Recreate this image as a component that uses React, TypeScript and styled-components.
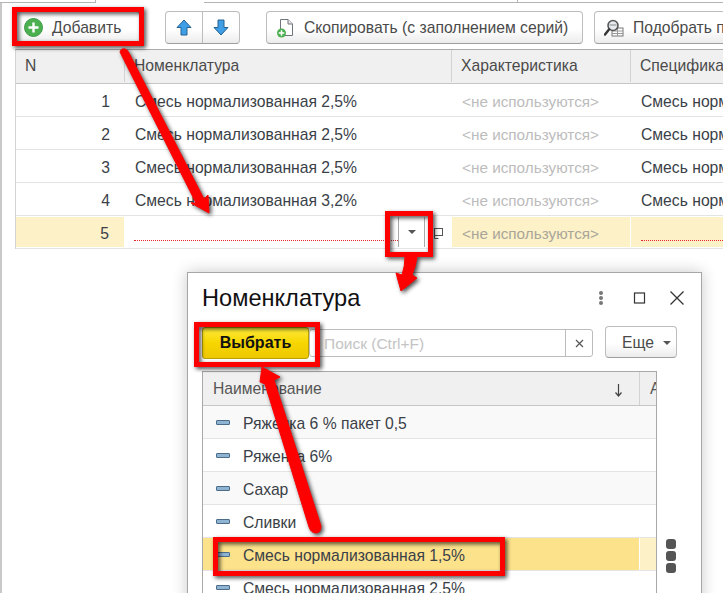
import * as React from 'react';
import styled, { createGlobalStyle } from 'styled-components';

const GlobalStyle = createGlobalStyle`
  html, body { margin: 0; padding: 0; background: #fff; }
  body { font-family: "Liberation Sans", Arial, sans-serif; font-size: 14px; color: #3a3f48; }
`;

const Page = styled.div`
  position: relative;
  width: 723px;
  height: 593px;
  overflow: hidden;
  background: #fff;
`;

//--- top tabs ---------------------------------------------------------------

const TabStrip = styled.div`
  display: flex;
  height: 3px;
`;

const TabPiece = styled.div<{ $width?: number; $open?: boolean; $edge?: boolean }>`
  flex: ${p => (p.$width ? `0 0 ${p.$width}px` : '1')};
  border-bottom: ${p => (p.$open ? 'none' : '1px solid #b4b4b4')};
  border-right: ${p => (p.$edge ? '1px solid #b4b4b4' : 'none')};
`;

const Body = styled.div`
  border-left: 2px solid #c8c8c8;
  height: 590px;
  margin-left: 0;
`;

//--- toolbar ----------------------------------------------------------------

const Toolbar = styled.div`
  display: flex;
  align-items: flex-start;
  height: 46px;
  padding: 8px 0 0 13px;
  box-sizing: border-box;
  white-space: nowrap;
`;

const ToolButton = styled.div<{ $width: number; $gap?: number; $pad?: number }>`
  display: flex;
  align-items: center;
  flex: 0 0 ${p => p.$width}px;
  height: 33px;
  box-sizing: border-box;
  margin-left: ${p => p.$gap || 0}px;
  padding-left: ${p => p.$pad || 9}px;
  gap: 9px;
  font-size: 15.7px;
  color: #4a4a4a;
  border: 1px solid #bdbdbd;
  border-bottom-color: #9e9e9e;
  border-radius: 4px;
  background: linear-gradient(#ffffff 55%, #ececec);
`;

const ButtonGroup = styled.div`
  display: flex;
  flex: 0 0 75px;
  height: 33px;
  margin-left: 25px;
  box-sizing: border-box;
  border: 1px solid #bdbdbd;
  border-bottom-color: #9e9e9e;
  border-radius: 4px;
  background: linear-gradient(#ffffff 55%, #ececec);
`;

const GroupPart = styled.div<{ $divider?: boolean }>`
  flex: 1;
  display: flex;
  align-items: center;
  justify-content: center;
  border-right: ${p => (p.$divider ? '1px solid #bdbdbd' : 'none')};
`;

//--- main grid --------------------------------------------------------------

const Grid = styled.div`
  margin-left: 13px;
  border-top: 1px solid #ababab;
  border-left: 1px solid #d4d4d4;
  white-space: nowrap;
`;

const GridRow = styled.div<{ $head?: boolean }>`
  display: flex;
  height: ${p => (p.$head ? 34 : 33)}px;
  box-sizing: border-box;
  border-bottom: 1px solid ${p => (p.$head ? '#c6c6c6' : '#e4e4e4')};
  background: ${p => (p.$head ? '#f0f0f0' : '#fff')};
  color: ${p => (p.$head ? '#4a4a4a' : '#3a3f48')};
  font-size: 15.7px;
`;

const GridCell = styled.div<{ $width: number; $right?: boolean; $muted?: boolean; $head?: boolean; $current?: boolean }>`
  position: relative;
  flex: 0 0 ${p => p.$width}px;
  height: ${p => (p.$current ? 30 : 32)}px;
  margin-top: ${p => (p.$current ? 1 : 0)}px;
  box-sizing: border-box;
  padding: ${p => (p.$right ? '0 15px 0 0' : `0 0 0 ${p.$head ? 9 : 10}px`)};
  line-height: ${p => (p.$current ? 34 : p.$head ? 32 : 36)}px;
  text-align: ${p => (p.$right ? 'right' : 'left')};
  font-size: ${p => (p.$muted ? '15.3px' : 'inherit')};
  color: ${p => (p.$muted ? (p.$current ? '#a9a599' : '#bcbcbc') : 'inherit')};
  overflow: hidden;
  background: ${p => (p.$current ? '#fdf1c8' : 'transparent')};
  border-right: ${p => (p.$head ? '1px solid #d2d2d2' : p.$current ? '1px solid #fff' : 'none')};
`;

const EditCell = styled.div`
  position: relative;
  flex: 0 0 327px;
  height: 30px;
  margin-top: 1px;
`;

const DottedLine = styled.div<{ $left: number; $right: number }>`
  position: absolute;
  left: ${p => p.$left}px;
  right: ${p => p.$right}px;
  bottom: 6px;
  border-bottom: 1px dotted #e8242c;
`;

const DropButton = styled.div`
  position: absolute;
  right: 27px;
  top: 0;
  width: 27px;
  height: 30px;
  box-sizing: border-box;
  border-left: 1px solid #a8a8a8;
  border-right: 1px solid #a8a8a8;
  display: flex;
  align-items: center;
  justify-content: center;
`;

const Caret = styled.div`
  width: 0;
  height: 0;
  border-left: 4px solid transparent;
  border-right: 4px solid transparent;
  border-top: 4px solid #555;
`;

const OpenIcon = styled.svg`
  position: absolute;
  right: 9px;
  top: 11px;
`;

//--- dialog -----------------------------------------------------------------

const Dialog = styled.div`
  position: absolute;
  left: 187px;
  top: 272px;
  width: 515px;
  height: 340px;
  box-sizing: border-box;
  background: #fff;
  border: 1px solid #a6a6a6;
  box-shadow: 0 0 14px rgba(0, 0, 0, 0.22);
  padding-left: 14px;
`;

const TitleBar = styled.div`
  display: flex;
  align-items: center;
  height: 50px;
  padding-right: 17px;
`;

const Title = styled.div`
  flex: 1;
  font-size: 23.6px;
  color: #111;
`;

const WindowIcons = styled.svg`
  display: block;
`;

const CommandBar = styled.div`
  display: flex;
  align-items: flex-start;
  height: 48px;
  padding-top: 4px;
  box-sizing: border-box;
`;

const ChooseButton = styled.div`
  flex: 0 0 107px;
  height: 32px;
  box-sizing: border-box;
  text-align: center;
  line-height: 30px;
  font-size: 16px;
  font-weight: bold;
  color: #111;
  border: 1px solid #b9a000;
  border-radius: 3px;
  background: linear-gradient(#ffeb3a, #f6d500 50%, #eec800);
`;

const SearchBox = styled.div`
  flex: 0 0 284px;
  display: flex;
  height: 28px;
  margin-top: 2px;
  box-sizing: border-box;
  border: 1px solid #bcbcbc;
  border-radius: 3px;
  font-size: 15.5px;
  line-height: 28px;
  color: #c4c4c4;
`;

const SearchText = styled.div`
  flex: 1;
  padding-left: 14px;
`;

const ClearButton = styled.div`
  flex: 0 0 26px;
  display: flex;
  align-items: center;
  justify-content: center;
  border-left: 1px solid #bcbcbc;
`;

const MoreButton = styled.div`
  flex: 0 0 72px;
  height: 32px;
  margin: -1px 0 0 12px;
  box-sizing: border-box;
  display: flex;
  align-items: center;
  padding: 2px 0 0 16px;
  gap: 9px;
  font-size: 15.7px;
  color: #4a4a4a;
  border: 1px solid #bdbdbd;
  border-bottom-color: #9e9e9e;
  border-radius: 4px;
  background: linear-gradient(#ffffff 55%, #ececec);
`;

const ListWrap = styled.div`
  display: flex;
`;

const List = styled.div`
  flex: 0 0 455px;
  width: 455px;
  min-width: 0;
  height: 240px;
  overflow: hidden;
  box-sizing: border-box;
  border: 1px solid #a8a8a8;
  border-bottom: none;
  font-size: 15.7px;
  white-space: nowrap;
`;

const ListHead = styled.div`
  display: flex;
  height: 34px;
  box-sizing: border-box;
  background: #f0f0f0;
  border-bottom: 1px solid #c6c6c6;
  color: #555;
`;

const HeadName = styled.div`
  position: relative;
  flex: 0 0 437px;
  padding-left: 10px;
  box-sizing: border-box;
  line-height: 33px;
  border-right: 1px solid #d2d2d2;
`;

const SortArrow = styled.svg`
  position: absolute;
  right: 16px;
  top: 11px;
`;

const HeadRest = styled.div`
  flex: 1;
  min-width: 0;
  padding-left: 10px;
  line-height: 33px;
  overflow: hidden;
`;

const ListRow = styled.div<{ $odd?: boolean; $active?: boolean }>`
  display: flex;
  height: 33px;
  box-sizing: border-box;
  border-bottom: 1px solid #e4e4e4;
  background: ${p => (p.$odd ? '#f9f9f9' : '#fff')};
  color: #3a3f48;
`;

const NameCell = styled.div<{ $active?: boolean }>`
  flex: 0 0 437px;
  display: flex;
  align-items: center;
  gap: 13px;
  box-sizing: border-box;
  padding-left: 13px;
  height: 32px;
  background: ${p => (p.$active ? '#fde28c' : 'transparent')};
  border-right: ${p => (p.$active ? '1px solid #fff' : 'none')};
`;

const ItemName = styled.span`
  padding-top: 3px;
`;

const RestCell = styled.div<{ $active?: boolean }>`
  flex: 1;
  height: 32px;
  background: ${p => (p.$active ? '#fdf1c8' : 'transparent')};
`;

const ItemMark = styled.div`
  flex: 0 0 14px;
  height: 5px;
  box-sizing: border-box;
  background: #8fb3d3;
  border: 1px solid #4d6c88;
  border-radius: 1px;
`;

const DotRail = styled.div`
  display: flex;
  flex-direction: column;
  gap: 2px;
  padding: 168px 0 0 9px;
`;

const Dot = styled.div`
  width: 10px;
  height: 10px;
  border-radius: 3px;
  background: #555;
`;

//--- red marks over the screenshot ------------------------------------------

const Marks = styled.svg`
  position: absolute;
  left: 0;
  top: 0;
  pointer-events: none;
  filter: drop-shadow(2px 2px 2px rgba(0, 0, 0, 0.7));
`;

//--- icons ------------------------------------------------------------------

const PlusIcon = () => (
  <svg width="19" height="19" viewBox="0 0 19 19">
    <circle cx="9.5" cy="9.5" r="9" fill="#4caf50" stroke="#3d9a45" />
    <path d="M9.5 4.5v10M4.5 9.5h10" stroke="#fff" strokeWidth="2.4" />
  </svg>
);

const BlueArrow = ({ down }: { down?: boolean }) => (
  <svg width="16" height="17" viewBox="0 0 16 17" style={down ? { transform: 'scaleY(-1)' } : undefined}>
    <path d="M8 1 L15 8.5 H11 V16 H5 V8.5 H1 Z" fill="#3f9fe6" stroke="#25618f" strokeWidth="1" strokeLinejoin="round" />
  </svg>
);

const CopyIcon = () => (
  <svg width="19" height="20" viewBox="0 0 19 20">
    <path d="M4.5 1.5 H12 L16.5 6 V17.5 H4.5 Z" fill="#fff" stroke="#70757c" />
    <path d="M12 1.5 V6 H16.5" fill="#e8e8e8" stroke="#70757c" />
    <circle cx="5.5" cy="15" r="4.5" fill="#4caf50" />
    <path d="M5.5 12.2v5.6M2.7 15h5.6" stroke="#fff" strokeWidth="1.5" />
  </svg>
);

const PickIcon = () => (
  <svg width="20" height="18" viewBox="0 0 20 18">
    <rect x="8" y="9" width="11" height="8" fill="#fff" stroke="#777" />
    <path d="M8 12h11M13.5 9v8M8 14.5h11" stroke="#999" strokeWidth="1" />
    <circle cx="9" cy="6.5" r="5" fill="#e6eaee" stroke="#555" strokeWidth="1.6" />
    <path d="M5.5 6h7" stroke="#888" />
    <path d="M5 10.5 L1 15.5" stroke="#333" strokeWidth="2.4" strokeLinecap="round" />
  </svg>
);

//--- data -------------------------------------------------------------------

const gridRows = [
  { n: 1, name: 'Смесь нормализованная 2,5%' },
  { n: 2, name: 'Смесь нормализованная 2,5%' },
  { n: 3, name: 'Смесь нормализованная 2,5%' },
  { n: 4, name: 'Смесь нормализованная 3,2%' },
];

const listRows = ['Ряженка 6 % пакет 0,5', 'Ряженка 6%', 'Сахар', 'Сливки', 'Смесь нормализованная 1,5%', 'Смесь нормализованная 2,5%'];

export default function App() {
  return (
    <Page>
      <GlobalStyle />
      <TabStrip>
        <TabPiece $width={95} $edge />
        <TabPiece $width={108} $open />
        <TabPiece $width={313} $edge />
        <TabPiece />
      </TabStrip>
      <Body>
        <Toolbar>
          <ToolButton $width={125} $pad={8}><PlusIcon />Добавить</ToolButton>
          <ButtonGroup>
            <GroupPart $divider><BlueArrow /></GroupPart>
            <GroupPart><BlueArrow down /></GroupPart>
          </ButtonGroup>
          <ToolButton $width={317} $gap={26}><CopyIcon />Скопировать (с заполнением серий)</ToolButton>
          <ToolButton $width={200} $gap={11}><PickIcon />Подобрать по штрихкоду</ToolButton>
        </Toolbar>
        <Grid>
          <GridRow $head>
            <GridCell $head $width={109}>N</GridCell>
            <GridCell $head $width={327}>Номенклатура</GridCell>
            <GridCell $head $width={179}>Характеристика</GridCell>
            <GridCell $head $width={95}>Спецификация</GridCell>
          </GridRow>
          {gridRows.map(r => (
            <GridRow key={r.n}>
              <GridCell $right $width={109}>{r.n}</GridCell>
              <GridCell $width={327}>{r.name}</GridCell>
              <GridCell $muted $width={179}>&lt;не используются&gt;</GridCell>
              <GridCell $width={95}>{r.name}</GridCell>
            </GridRow>
          ))}
          <GridRow>
            <GridCell $right $current $width={109}>5</GridCell>
            <EditCell>
              <DottedLine $left={9} $right={54} />
              <DropButton><Caret /></DropButton>
              <OpenIcon width="10" height="11" viewBox="0 0 10 11">
                <rect x="1.5" y="0.5" width="8" height="7" fill="#fff" stroke="#555" />
                <path d="M1.5 7.5v3h4" fill="none" stroke="#555" />
              </OpenIcon>
            </EditCell>
            <GridCell $muted $current $width={179}>&lt;не используются&gt;</GridCell>
            <GridCell $current $width={95}><DottedLine $left={10} $right={0} /></GridCell>
          </GridRow>
        </Grid>
      </Body>

      <Dialog>
        <TitleBar>
          <Title>Номенклатура</Title>
          <WindowIcons width="90" height="16" viewBox="0 0 90 16">
            <circle cx="7" cy="3" r="2" fill="#777" />
            <circle cx="7" cy="8" r="2" fill="#777" />
            <circle cx="7" cy="13" r="2" fill="#777" />
            <rect x="40.5" y="3" width="10" height="10" fill="none" stroke="#333" strokeWidth="1.2" />
            <path d="M76.5 1.5 L89.5 14.5 M89.5 1.5 L76.5 14.5" stroke="#333" strokeWidth="1.3" />
          </WindowIcons>
        </TitleBar>
        <CommandBar>
          <ChooseButton>Выбрать</ChooseButton>
          <SearchBox>
            <SearchText>Поиск (Ctrl+F)</SearchText>
            <ClearButton>
              <svg width="9" height="9" viewBox="0 0 9 9"><path d="M1 1l7 7M8 1l-7 7" stroke="#555" strokeWidth="1.2" /></svg>
            </ClearButton>
          </SearchBox>
          <MoreButton>Еще<Caret /></MoreButton>
        </CommandBar>
        <ListWrap>
          <List>
            <ListHead>
              <HeadName>
                Наименование
                <SortArrow width="9" height="14" viewBox="0 0 9 14">
                  <path d="M4.5 1v11M1.5 9.5l3 3.5 3-3.5" fill="none" stroke="#444" strokeWidth="1.2" />
                </SortArrow>
              </HeadName>
              <HeadRest>А</HeadRest>
            </ListHead>
            {listRows.map((name, i) => (
              <ListRow key={name} $odd={i % 2 === 0 && i < 4}>
                <NameCell $active={i === 4}><ItemMark /><ItemName>{name}</ItemName></NameCell>
                <RestCell $active={i === 4} />
              </ListRow>
            ))}
          </List>
          <DotRail><Dot /><Dot /><Dot /></DotRail>
        </ListWrap>
      </Dialog>

      <Marks width="723" height="593" viewBox="0 0 723 593">
        <g fill="none" stroke="#f00" strokeWidth="5">
          <rect x="14.5" y="9.5" width="127" height="34" />
          <rect x="387.5" y="213.5" width="43" height="41" />
          <rect x="196.5" y="324.5" width="121" height="40" />
          <rect x="215.5" y="539.5" width="287" height="34" />
        </g>
        <g fill="#f00" stroke="#f00" strokeLinejoin="round">
          <path d="M120 52 Q121 48 125 49 Q128 50 129 53 L204 199 L208 195 L209 213 L191 203 L196 203 Z" />
          <path d="M405 257 L417 257 Q416 266 412 275 L417 278 L401 291 L396 273 L402 275 Q405 266 405 257 Z" />
          <path d="M262 367 L280 377 L274 380 L321 526 Q321 533 316 533 Q311 533 309 527 L265 384 L260 382 Z" />
        </g>
      </Marks>
    </Page>
  );
}
